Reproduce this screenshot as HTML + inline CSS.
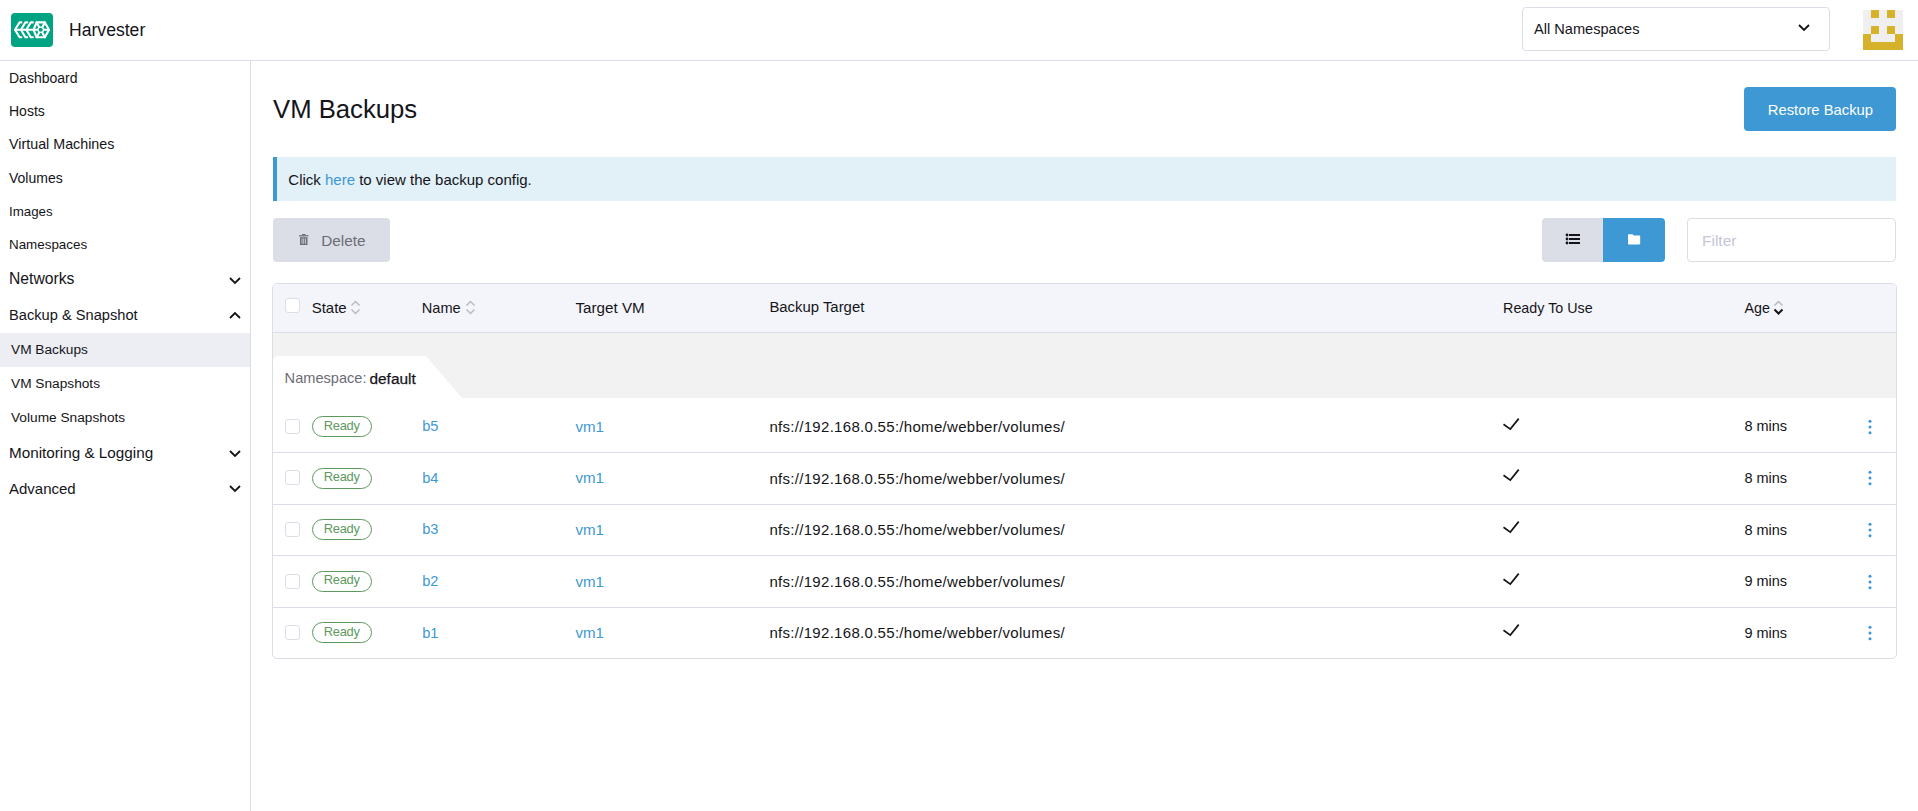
<!DOCTYPE html>
<html>
<head>
<meta charset="utf-8">
<style>
*{box-sizing:border-box;margin:0;padding:0}
html,body{width:1918px;height:811px;overflow:hidden;background:#fff}
body{font-family:"Liberation Sans",sans-serif;color:#141419;position:relative}
.a{position:absolute;white-space:nowrap;line-height:1}
.box{position:absolute}
.link{color:#3d98d3}
</style>
</head>
<body>
<div class="box" style="left:0px;top:60px;width:1918px;height:1px;background:#dcdee7"></div>
<div class="box" style="left:250px;top:61px;width:1px;height:750px;background:#dcdee7"></div>
<div class="box" style="left:11px;top:13px;width:42px;height:34px;border-radius:4px;background:#00a483">
<svg width="42" height="34" viewBox="0 0 42 34" style="position:absolute;left:0;top:0">
<g fill="none" stroke="#fff" stroke-width="2.1" stroke-linejoin="round" stroke-linecap="round">
<line x1="4" y1="16.8" x2="37.5" y2="16.8"/>
<polyline points="10.3,9.4 8.6,9.4 4,16.8 8.6,24.2 10.3,24.2"/>
<polyline points="16.2,9.4 14.4,9.4 9.9,16.8 14.4,24.2 16.2,24.2"/>
<polyline points="21.9,9.4 19.8,9.4 15.3,16.8 19.8,24.2 21.9,24.2"/>
<polygon points="25.6,9.4 33.9,9.4 38,16.8 33.9,24.2 25.6,24.2 22.5,16.8"/>
<line x1="25.6" y1="9.4" x2="33.9" y2="24.2"/>
<line x1="33.9" y1="9.4" x2="25.6" y2="24.2"/>
</g>
<circle cx="29.7" cy="16.8" r="3.3" fill="#fff"/>
<circle cx="29.7" cy="16.8" r="2.0" fill="#00a483"/>
</svg></div>
<div class="a" style="left:69.00px;top:22.10px;font-size:17.6px;">Harvester</div>
<div class="box" style="left:1522px;top:7px;width:308px;height:44px;border:1px solid #dcdee7;border-radius:4px"></div>
<div class="a" style="left:1534.00px;top:21.84px;font-size:14.6px;">All Namespaces</div>
<svg width="14" height="9" viewBox="0 0 14 9" style="position:absolute;left:1797px;top:23px"><polyline points="2,2 7,7 12,2" fill="none" stroke="#141419" stroke-width="1.8"/></svg>
<div class="box" style="left:1863px;top:10px;width:40px;height:40px;background:#efefef"><i style="position:absolute;left:8px;top:0px;width:8px;height:8px;background:#d6b22b"></i><i style="position:absolute;left:24px;top:0px;width:8px;height:8px;background:#d6b22b"></i><i style="position:absolute;left:8px;top:16px;width:8px;height:8px;background:#d6b22b"></i><i style="position:absolute;left:24px;top:16px;width:8px;height:8px;background:#d6b22b"></i><i style="position:absolute;left:0px;top:24px;width:8px;height:8px;background:#d6b22b"></i><i style="position:absolute;left:32px;top:24px;width:8px;height:8px;background:#d6b22b"></i><i style="position:absolute;left:0px;top:32px;width:40px;height:8px;background:#d6b22b"></i></div>
<div class="box" style="left:0px;top:333px;width:250px;height:34px;background:#edeef3"></div>
<div class="a" style="left:9.00px;top:71.05px;font-size:14px;">Dashboard</div>
<div class="a" style="left:9.00px;top:104.35px;font-size:14px;">Hosts</div>
<div class="a" style="left:9.00px;top:137.40px;font-size:14.3px;">Virtual Machines</div>
<div class="a" style="left:9.00px;top:170.65px;font-size:14px;">Volumes</div>
<div class="a" style="left:9.00px;top:205.34px;font-size:13.3px;">Images</div>
<div class="a" style="left:9.00px;top:238.46px;font-size:13.4px;">Namespaces</div>
<div class="a" style="left:9.00px;top:271.41px;font-size:15.7px;">Networks</div>
<div class="a" style="left:9.00px;top:308.40px;font-size:14.65px;">Backup &amp; Snapshot</div>
<div class="a" style="left:9.00px;top:445.39px;font-size:15.25px;">Monitoring &amp; Logging</div>
<div class="a" style="left:9.00px;top:480.80px;font-size:15px;">Advanced</div>
<div class="a" style="left:11.00px;top:343.10px;font-size:13.7px;">VM Backups</div>
<div class="a" style="left:11.00px;top:377.00px;font-size:13.7px;">VM Snapshots</div>
<div class="a" style="left:11.00px;top:410.90px;font-size:13.7px;">Volume Snapshots</div>
<svg width="14" height="9" viewBox="0 0 14 9" style="position:absolute;left:228px;top:276px"><polyline points="2,2 7,7 12,2" fill="none" stroke="#141419" stroke-width="1.8"/></svg>
<svg width="14" height="9" viewBox="0 0 14 9" style="position:absolute;left:228px;top:311px"><polyline points="2,7 7,2 12,7" fill="none" stroke="#141419" stroke-width="1.8"/></svg>
<svg width="14" height="9" viewBox="0 0 14 9" style="position:absolute;left:228px;top:449px"><polyline points="2,2 7,7 12,2" fill="none" stroke="#141419" stroke-width="1.8"/></svg>
<svg width="14" height="9" viewBox="0 0 14 9" style="position:absolute;left:228px;top:484px"><polyline points="2,2 7,7 12,2" fill="none" stroke="#141419" stroke-width="1.8"/></svg>
<div class="a" style="left:273.00px;top:97.04px;font-size:25.7px;">VM Backups</div>
<div class="box" style="left:1744px;top:87px;width:152px;height:44px;border-radius:4px;background:#3d98d3"></div>
<div class="a" style="left:1767.75px;top:102.87px;font-size:14.8px;color:#fff">Restore Backup</div>
<div class="box" style="left:273px;top:157px;width:1623px;height:44px;background:#e2f0f8;border-left:4px solid #3d98d3"></div>
<div class="a" style="left:288.30px;top:172.30px;font-size:15px;">Click <span class="link">here</span> to view the backup config.</div>
<div class="box" style="left:273px;top:218px;width:117px;height:44px;border-radius:4px;background:#dcdee7"></div>
<svg width="10" height="12" viewBox="0 0 10 12" style="position:absolute;left:299px;top:234px"><g fill="#6c6c76"><rect x="0" y="1.2" width="9.5" height="1.2"/><rect x="3" y="0" width="3.5" height="1.4"/><path d="M1 3.2h7.5v7.8h-7.5z"/></g><g fill="#dcdee7"><rect x="2.6" y="4.4" width="0.8" height="5.4"/><rect x="4.35" y="4.4" width="0.8" height="5.4"/><rect x="6.1" y="4.4" width="0.8" height="5.4"/></g></svg>
<div class="a" style="left:321.20px;top:232.85px;font-size:15.3px;color:#6c6c76">Delete</div>
<div class="box" style="left:1542px;top:218px;width:61px;height:44px;border-radius:4px 0 0 4px;background:#dcdee7"></div>
<div class="box" style="left:1603px;top:218px;width:62px;height:44px;border-radius:0 4px 4px 0;background:#3d98d3"></div>
<svg width="16" height="13" viewBox="0 0 16 13" style="position:absolute;left:1565px;top:233px"><g fill="#141419"><circle cx="2" cy="2" r="1.4"/><circle cx="2" cy="6" r="1.4"/><circle cx="2" cy="10" r="1.4"/><rect x="4" y="1" width="11" height="2"/><rect x="4" y="5" width="11" height="2"/><rect x="4" y="9" width="11" height="2"/></g></svg>
<svg width="14" height="11" viewBox="0 0 14 11" style="position:absolute;left:1627px;top:234px"><path d="M1.8 0.2h3.6l1.5 1.4h5.5a0.8 0.8 0 0 1 0.8 0.8v7.2a0.8 0.8 0 0 1-0.8 0.8H1.8a0.8 0.8 0 0 1-0.8-0.8V1a0.8 0.8 0 0 1 0.8-0.8z" fill="#fff"/></svg>
<div class="box" style="left:1687px;top:218px;width:209px;height:44px;border:1px solid #dcdee7;border-radius:4px"></div>
<div class="a" style="left:1702.00px;top:232.98px;font-size:15.5px;color:#c4c6d6">Filter</div>
<div class="box" style="left:272px;top:283px;width:1625px;height:376px;border:1px solid #dcdee7;border-radius:5px"></div>
<div class="box" style="left:273px;top:284px;width:1623px;height:48px;background:#f4f5fa;border-radius:4px 4px 0 0"></div>
<div class="box" style="left:273px;top:332px;width:1623px;height:1px;background:#dcdee7"></div>
<div class="box" style="left:273px;top:333px;width:1623px;height:65px;background:#f2f2f2"></div>
<div class="box" style="left:273px;top:356px;width:153px;height:42px;background:#fff;border-top-left-radius:5px"></div>
<svg width="40" height="42" style="position:absolute;left:423px;top:356px"><polygon points="0,0 3,0 39,42 0,42" fill="#fff"/></svg>
<div class="box" style="left:273px;top:452px;width:1623px;height:1px;background:#dcdee7"></div>
<div class="box" style="left:273px;top:504px;width:1623px;height:1px;background:#dcdee7"></div>
<div class="box" style="left:273px;top:555px;width:1623px;height:1px;background:#dcdee7"></div>
<div class="box" style="left:273px;top:607px;width:1623px;height:1px;background:#dcdee7"></div>
<div class="box" style="left:285px;top:298px;width:15px;height:15px;border:1px solid #dcdee7;border-radius:3px;background:#fff"></div>
<div class="a" style="left:311.70px;top:300.20px;font-size:15px;">State</div>
<svg width="11" height="15" viewBox="0 0 11 15" style="position:absolute;left:349.5px;top:300px"><polyline points="1.5,5.5 5.5,1.5 9.5,5.5" fill="none" stroke="#b8bac6" stroke-width="1.5"/><polyline points="1.5,9.5 5.5,13.5 9.5,9.5" fill="none" stroke="#b8bac6" stroke-width="1.5"/></svg>
<div class="a" style="left:421.80px;top:300.54px;font-size:14.6px;">Name</div>
<svg width="11" height="15" viewBox="0 0 11 15" style="position:absolute;left:464.5px;top:300px"><polyline points="1.5,5.5 5.5,1.5 9.5,5.5" fill="none" stroke="#b8bac6" stroke-width="1.5"/><polyline points="1.5,9.5 5.5,13.5 9.5,9.5" fill="none" stroke="#b8bac6" stroke-width="1.5"/></svg>
<div class="a" style="left:575.50px;top:300.03px;font-size:15.2px;">Target VM</div>
<div class="a" style="left:769.40px;top:300.29px;font-size:14.9px;">Backup Target</div>
<div class="a" style="left:1503.10px;top:300.80px;font-size:14.3px;">Ready To Use</div>
<div class="a" style="left:1744.40px;top:300.80px;font-size:14.3px;">Age</div>
<svg width="11" height="15" viewBox="0 0 11 15" style="position:absolute;left:1773px;top:300px"><polyline points="1.5,5.5 5.5,1.5 9.5,5.5" fill="none" stroke="#b8bac6" stroke-width="1.5"/><polyline points="1.5,9.5 5.5,13.5 9.5,9.5" fill="none" stroke="#141419" stroke-width="2"/></svg>
<div class="a" style="left:284.60px;top:371.44px;font-size:14.6px;color:#6c6c76">Namespace:</div>
<div class="a" style="left:369.50px;top:370.76px;font-size:15.4px;-webkit-text-stroke:0.25px #141419">default</div>
<div class="box" style="left:285px;top:419px;width:15px;height:15px;border:1px solid #dcdee7;border-radius:3px;background:#fff"></div>
<div class="box" style="left:312px;top:416px;width:60px;height:21px;border:1px solid #5d995d;border-radius:11px"></div>
<div class="a" style="left:323.80px;top:419.68px;font-size:12.9px;color:#5d995d;letter-spacing:-0.3px">Ready</div>
<div class="a" style="left:422.20px;top:419.24px;font-size:14.6px;color:#3d98d3">b5</div>
<div class="a" style="left:575.50px;top:418.82px;font-size:15.1px;color:#3d98d3">vm1</div>
<div class="a" style="left:769.40px;top:418.90px;font-size:15px;letter-spacing:0.3px">nfs://192.168.0.55:/home/webber/volumes/</div>
<svg width="18" height="13" viewBox="0 0 18 13" style="position:absolute;left:1501.5px;top:417.7px"><polyline points="1.5,6.3 8.3,11.1 16.7,0.6" fill="none" stroke="#141419" stroke-width="1.7"/></svg>
<div class="a" style="left:1744.40px;top:419.33px;font-size:14.5px;">8 mins</div>
<svg width="6" height="16" viewBox="0 0 6 16" style="position:absolute;left:1867px;top:418.7px"><g fill="#3d98d3"><circle cx="3" cy="2.3" r="1.5"/><circle cx="3" cy="8" r="1.5"/><circle cx="3" cy="13.7" r="1.5"/></g></svg>
<div class="box" style="left:285px;top:470px;width:15px;height:15px;border:1px solid #dcdee7;border-radius:3px;background:#fff"></div>
<div class="box" style="left:312px;top:468px;width:60px;height:21px;border:1px solid #5d995d;border-radius:11px"></div>
<div class="a" style="left:323.80px;top:471.28px;font-size:12.9px;color:#5d995d;letter-spacing:-0.3px">Ready</div>
<div class="a" style="left:422.20px;top:470.84px;font-size:14.6px;color:#3d98d3">b4</div>
<div class="a" style="left:575.50px;top:470.42px;font-size:15.1px;color:#3d98d3">vm1</div>
<div class="a" style="left:769.40px;top:470.50px;font-size:15px;letter-spacing:0.3px">nfs://192.168.0.55:/home/webber/volumes/</div>
<svg width="18" height="13" viewBox="0 0 18 13" style="position:absolute;left:1501.5px;top:469.3px"><polyline points="1.5,6.3 8.3,11.1 16.7,0.6" fill="none" stroke="#141419" stroke-width="1.7"/></svg>
<div class="a" style="left:1744.40px;top:470.93px;font-size:14.5px;">8 mins</div>
<svg width="6" height="16" viewBox="0 0 6 16" style="position:absolute;left:1867px;top:470.3px"><g fill="#3d98d3"><circle cx="3" cy="2.3" r="1.5"/><circle cx="3" cy="8" r="1.5"/><circle cx="3" cy="13.7" r="1.5"/></g></svg>
<div class="box" style="left:285px;top:522px;width:15px;height:15px;border:1px solid #dcdee7;border-radius:3px;background:#fff"></div>
<div class="box" style="left:312px;top:519px;width:60px;height:21px;border:1px solid #5d995d;border-radius:11px"></div>
<div class="a" style="left:323.80px;top:522.88px;font-size:12.9px;color:#5d995d;letter-spacing:-0.3px">Ready</div>
<div class="a" style="left:422.20px;top:522.44px;font-size:14.6px;color:#3d98d3">b3</div>
<div class="a" style="left:575.50px;top:522.02px;font-size:15.1px;color:#3d98d3">vm1</div>
<div class="a" style="left:769.40px;top:522.10px;font-size:15px;letter-spacing:0.3px">nfs://192.168.0.55:/home/webber/volumes/</div>
<svg width="18" height="13" viewBox="0 0 18 13" style="position:absolute;left:1501.5px;top:520.9px"><polyline points="1.5,6.3 8.3,11.1 16.7,0.6" fill="none" stroke="#141419" stroke-width="1.7"/></svg>
<div class="a" style="left:1744.40px;top:522.53px;font-size:14.5px;">8 mins</div>
<svg width="6" height="16" viewBox="0 0 6 16" style="position:absolute;left:1867px;top:521.9px"><g fill="#3d98d3"><circle cx="3" cy="2.3" r="1.5"/><circle cx="3" cy="8" r="1.5"/><circle cx="3" cy="13.7" r="1.5"/></g></svg>
<div class="box" style="left:285px;top:574px;width:15px;height:15px;border:1px solid #dcdee7;border-radius:3px;background:#fff"></div>
<div class="box" style="left:312px;top:571px;width:60px;height:21px;border:1px solid #5d995d;border-radius:11px"></div>
<div class="a" style="left:323.80px;top:574.48px;font-size:12.9px;color:#5d995d;letter-spacing:-0.3px">Ready</div>
<div class="a" style="left:422.20px;top:574.04px;font-size:14.6px;color:#3d98d3">b2</div>
<div class="a" style="left:575.50px;top:573.62px;font-size:15.1px;color:#3d98d3">vm1</div>
<div class="a" style="left:769.40px;top:573.70px;font-size:15px;letter-spacing:0.3px">nfs://192.168.0.55:/home/webber/volumes/</div>
<svg width="18" height="13" viewBox="0 0 18 13" style="position:absolute;left:1501.5px;top:572.5px"><polyline points="1.5,6.3 8.3,11.1 16.7,0.6" fill="none" stroke="#141419" stroke-width="1.7"/></svg>
<div class="a" style="left:1744.40px;top:574.13px;font-size:14.5px;">9 mins</div>
<svg width="6" height="16" viewBox="0 0 6 16" style="position:absolute;left:1867px;top:573.5px"><g fill="#3d98d3"><circle cx="3" cy="2.3" r="1.5"/><circle cx="3" cy="8" r="1.5"/><circle cx="3" cy="13.7" r="1.5"/></g></svg>
<div class="box" style="left:285px;top:625px;width:15px;height:15px;border:1px solid #dcdee7;border-radius:3px;background:#fff"></div>
<div class="box" style="left:312px;top:622px;width:60px;height:21px;border:1px solid #5d995d;border-radius:11px"></div>
<div class="a" style="left:323.80px;top:626.08px;font-size:12.9px;color:#5d995d;letter-spacing:-0.3px">Ready</div>
<div class="a" style="left:422.20px;top:625.64px;font-size:14.6px;color:#3d98d3">b1</div>
<div class="a" style="left:575.50px;top:625.22px;font-size:15.1px;color:#3d98d3">vm1</div>
<div class="a" style="left:769.40px;top:625.30px;font-size:15px;letter-spacing:0.3px">nfs://192.168.0.55:/home/webber/volumes/</div>
<svg width="18" height="13" viewBox="0 0 18 13" style="position:absolute;left:1501.5px;top:624.1px"><polyline points="1.5,6.3 8.3,11.1 16.7,0.6" fill="none" stroke="#141419" stroke-width="1.7"/></svg>
<div class="a" style="left:1744.40px;top:625.73px;font-size:14.5px;">9 mins</div>
<svg width="6" height="16" viewBox="0 0 6 16" style="position:absolute;left:1867px;top:625.1px"><g fill="#3d98d3"><circle cx="3" cy="2.3" r="1.5"/><circle cx="3" cy="8" r="1.5"/><circle cx="3" cy="13.7" r="1.5"/></g></svg>
</body>
</html>
